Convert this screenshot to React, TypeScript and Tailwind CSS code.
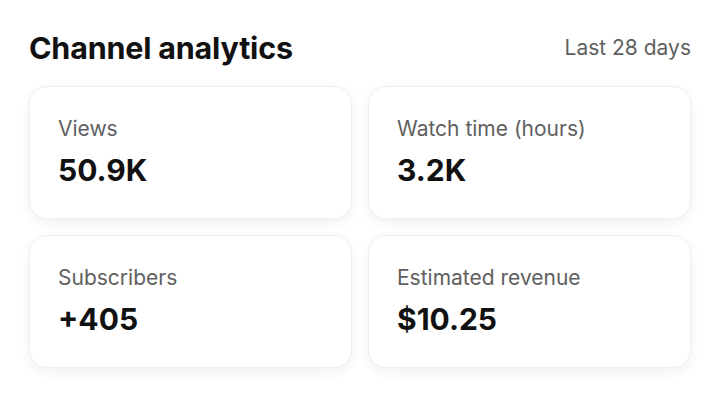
const STATS = [
  { label: 'Views', value: '50.9K' },
  { label: 'Watch time (hours)', value: '3.2K' },
  { label: 'Subscribers', value: '+405' },
  { label: 'Estimated revenue', value: '$10.25' },
];

export default function App() {
  return (
    <div
      className="h-[404px] w-[720px] bg-white px-[29px] pt-[30px] text-[#111]"
      style={{ fontFamily: 'Inter, "Noto Sans", sans-serif' }}
    >
      {/* header */}
      <div className="flex items-center justify-between">
        <h1 className="text-[30.5px] font-bold leading-[36px] tracking-[-0.2px]">
          Channel analytics
        </h1>
        <span className="text-[21px] text-[#606060]">Last 28 days</span>
      </div>

      {/* cards */}
      <div className="mt-[20px] grid grid-cols-2 gap-4">
        {STATS.map(({ label, value }) => (
          <div
            key={label}
            className="flex h-[133px] flex-col rounded-[18px] border border-[#efefef] bg-white px-[28px] pt-[29px] shadow-[0_4px_12px_rgba(0,0,0,0.06)]"
          >
            <span className="text-[21px] leading-[26px] text-[#606060]">{label}</span>
            <span className="mt-[10px] text-[30px] font-bold leading-[36px]">{value}</span>
          </div>
        ))}
      </div>
    </div>
  );
}
